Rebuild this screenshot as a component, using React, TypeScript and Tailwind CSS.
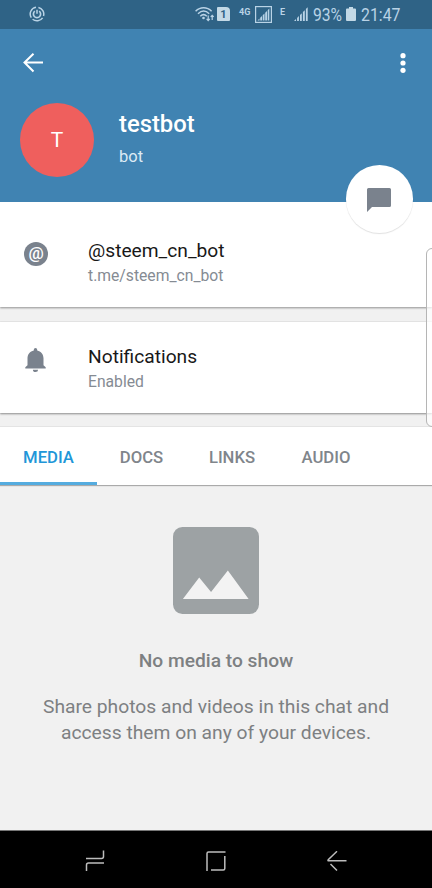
import React from 'react';

const tabs = [
  { name: 'MEDIA', active: true, style: 'w-[97px]' },
  { name: 'DOCS', active: false, style: 'w-[89px]' },
  { name: 'LINKS', active: false, style: 'w-[92px]' },
  { name: 'AUDIO', active: false, style: 'w-[96px]' },
];

function StatusBar() {
  return (
    <div className="flex h-[29px] shrink-0 items-start bg-[#2f6386] text-[#b9d3e6]">
      {/* Data saver */}
      <svg className="ml-[29px] mt-[6px] h-4 w-4 shrink-0" viewBox="0 0 16 16" fill="none" stroke="currentColor" strokeWidth="1.5">
        <path d="M7 1.3A6.8 6.8 0 0 0 2.3 11.7M3.6 13.2A6.8 6.8 0 0 0 13.6 11.8M14.5 10A6.8 6.8 0 0 0 9.4 1.4" />
        <path d="M5.8 5.2A3.6 3.6 0 1 0 10.2 5.2" strokeWidth="1.7" />
        <path d="M8 3.7v4.1" />
      </svg>

      {/* Wifi */}
      <svg className="ml-[150px] mt-[6px] h-4 w-[20px] shrink-0" viewBox="0 0 20 16" fill="none" stroke="currentColor" strokeWidth="1.5">
        <path d="M.6 5.2C5.3 .5 12 .5 16.6 5.2" />
        <path d="M3 7.7C6.5 4.4 10.8 4.4 14.2 7.7" />
        <path d="M5.3 10.2C7.3 8.3 9.9 8.3 11.8 10.2" />
        <circle cx="8.5" cy="12" r="1.3" fill="currentColor" stroke="none" />
        <path d="M13.2 9.5v5M11.6 12.8l1.6 1.7 1.6-1.7M17.2 14V9.3M15.7 10.9l1.5-1.6 1.5 1.6" strokeWidth="1.2" />
      </svg>
      <div className="ml-[2px] mt-[7px] flex h-[14px] w-[13px] shrink-0 items-center justify-center rounded-[1px] rounded-tr-[4px] bg-[#c3d9e6] text-[11px] font-bold leading-none text-[#2f6386]">1</div>
      <span className="ml-[9px] mt-[7px] w-[16px] shrink-0 text-[9px] font-bold leading-[10px]">4G</span>
      <svg className="mt-[6px] h-[17px] w-[17px] shrink-0" viewBox="0 0 17 17" fill="currentColor">
        <rect x=".6" y=".6" width="15.8" height="15.8" fill="none" stroke="currentColor" strokeWidth="1.2" />
        <path d="M2.5 14.5L4.5 12.5V14.5zM5.2 14.5V11.7L7 9.9V14.5zM7.7 14.5V9.2L9.5 7.4V14.5zM10.2 14.5V6.7L12 4.9V14.5zM12.7 14.5V4.2L14.3 2.6V14.5z" />
      </svg>
      <span className="ml-[8px] mt-[7px] w-[14px] shrink-0 text-[9px] font-bold leading-[10px]">E</span>
      <svg className="mt-[7px] h-[14px] w-[14px] shrink-0" viewBox="0 0 14 14" fill="currentColor">
        <path d="M0 14L2 12V14zM3.1 14V10.9L4.9 9.1V14zM6 14V8L7.8 6.2V14zM8.9 14V5.1L10.8 3.2V14zM11.9 14V2.1L13.7 .3V14z" />
      </svg>
      <span className="ml-[5px] mt-[5px] w-[33px] shrink-0 origin-left scale-x-[0.87] text-[18px] leading-5">93%</span>
      <svg className="mt-[7px] h-[14px] w-[10px] shrink-0" viewBox="0 0 10 14" fill="#c3d9e6">
        <path d="M3 0h4v1.5h2a1 1 0 0 1 1 1V13a1 1 0 0 1-1 1H1a1 1 0 0 1-1-1V2.5a1 1 0 0 1 1-1h2z" />
      </svg>
      <span className="ml-[5px] mt-[5px] origin-left scale-x-[0.88] text-[18px] leading-5">21:47</span>
    </div>
  );
}

function Header() {
  return (
    <header className="relative z-10 h-[173px] shrink-0 bg-[#4083b2] text-white">
      <div className="flex h-[67px] items-center justify-between pl-[23px] pr-[26px]">
        <svg className="h-5 w-5" viewBox="0 0 20 20" fill="none" stroke="currentColor" strokeWidth="2">
          <path d="M20 9.5H1.5M10.5 .7L1.5 9.5l9 9" />
        </svg>
        <svg className="h-5 w-[6px]" viewBox="0 0 6 20" fill="currentColor">
          <circle cx="3" cy="2.7" r="2.6" />
          <circle cx="3" cy="10" r="2.6" />
          <circle cx="3" cy="17.3" r="2.6" />
        </svg>
      </div>

      <div className="flex pl-[20px] pt-[7px]">
        <div className="flex h-[74px] w-[74px] items-center justify-center rounded-full bg-[#ef5f5d] text-[21px]">
          <span className="pt-[2px]">T</span>
        </div>
        <div className="ml-[25px] pt-[7px]">
          <h1 className="text-[23.8px] font-medium leading-[28px]">testbot</h1>
          <p className="mt-[8px] text-[16.5px] leading-[22px] text-[#dcebf5]">bot</p>
        </div>
      </div>

      {/* Floating message button */}
      <button className="absolute right-[19px] top-[136px] flex h-[68px] w-[67px] items-center justify-center rounded-full bg-white shadow-[0_1px_1px_rgba(0,0,0,0.12)]">
        <svg className="mr-[1px] mt-[1px] h-6 w-6" viewBox="0 0 24 24" fill="#7a828d">
          <path d="M1.5 0h21A1.5 1.5 0 0 1 24 1.5v16a1.5 1.5 0 0 1-1.5 1.5H5L0 24V1.5A1.5 1.5 0 0 1 1.5 0z" />
        </svg>
      </button>
    </header>
  );
}

function NavBar() {
  return (
    <nav className="flex h-[58px] shrink-0 items-center justify-between border-t border-[#777] bg-black px-[85px] pt-[3px] text-[#bdbdbd]">
      <svg className="h-[22px] w-5" viewBox="0 0 20 22" fill="none" stroke="currentColor" strokeWidth="1.5">
        <path d="M1 8.5h15.500a2 2 0 0 0 2-2V.5M19 13H3.500a2 2 0 0 0-2 2V21" />
      </svg>
      <svg className="h-[21px] w-5" viewBox="0 0 20 21" fill="none" stroke="currentColor" strokeWidth="1.5">
        <path d="M1 20V2.500a1.500 1.500 0 0 1 1.500-1.500H19.500M18.800 5v12.500a1.500 1.500 0 0 1-1.500 1.500H5" />
      </svg>
      <svg className="h-5 w-5" viewBox="0 0 20 20" fill="none" stroke="currentColor" strokeWidth="1.5">
        <path d="M10 .3L1.200 8.800q-.6 1 .5 1H19.500M3.500 13L10 19.500" />
      </svg>
    </nav>
  );
}

export default function App() {
  return (
    <main className="relative flex h-[888px] w-[432px] flex-col overflow-hidden bg-[#f1f1f1] font-['Roboto',sans-serif]">
      <StatusBar />
      <Header />

      {/* Username */}
      <section className="flex h-[105px] shrink-0 bg-white pl-[24px] shadow-[0_1px_2px_rgba(0,0,0,0.4)]">
        <div className="mt-[40px] flex h-6 w-6 items-center justify-center rounded-full bg-[#7a828d] pb-[2px] text-[17px] font-medium leading-none text-white">@</div>
        <div className="ml-[40px] pt-[36px]">
          <p className="text-[19.2px] leading-[25px] text-[#181818]">@steem_cn_bot</p>
          <p className="mt-px text-[15.7px] leading-[23px] text-[#858b93]">t.me/steem_cn_bot</p>
        </div>
      </section>

      {/* Notifications */}
      <section className="mt-[15px] flex h-[91px] shrink-0 bg-white pl-[25px] shadow-[0_0_1px_rgba(0,0,0,0.2),0_1px_2px_rgba(0,0,0,0.4)]">
        <svg className="mt-[26px] h-6 w-[21px]" viewBox="0 0 21 24" fill="#7a828d">
          <path d="M10.5 0A1.7 1.7 0 0 0 8.8 1.7v.7C5 3.2 2.5 6.4 2.5 10.2v7L.3 19.300v1.200h20.400v-1.200l-2.200-2.100v-7c0-3.800-2.500-7-6.300-7.800v-.7A1.700 1.700 0 0 0 10.500 0z" />
          <path d="M7.9 21.7h5.200a2.600 2.300 0 0 1-5.200 0z" />
        </svg>
        <div className="ml-[42px] pt-[22px]">
          <p className="text-[19.2px] leading-[25px] text-[#181818]">Notifications</p>
          <p className="mt-px text-[15.7px] leading-[23px] text-[#858b93]">Enabled</p>
        </div>
      </section>

      {/* Shared media tabs */}
      <div className="mt-[14px] flex h-[58px] shrink-0 bg-white shadow-[0_0_1px_rgba(0,0,0,0.3),0_1px_1px_rgba(0,0,0,0.25)]">
        {tabs.map((tab) => (
          <button
            key={tab.name}
            className={`${tab.style} flex items-center justify-center border-b-[3px] pt-[7px] text-[16.7px] font-medium ${
              tab.active ? 'border-[#55acdf] text-[#2196d8]' : 'border-transparent text-[#80858b]'
            }`}
          >
            {tab.name}
          </button>
        ))}
      </div>

      {/* Empty state */}
      <section className="flex flex-1 flex-col items-center pt-[42px] text-center text-[#7d8082]">
        <svg className="h-[87px] w-[86px]" viewBox="0 0 87 87" preserveAspectRatio="none">
          <rect width="87" height="87" rx="9.5" fill="#9da2a4" />
          <path d="M10 72L26.5 50.5 38.5 65 55.5 43.5 76.5 72z" fill="#f3f3f3" />
        </svg>
        <h2 className="mt-[34px] text-[19.2px] font-medium leading-[26px]">No media to show</h2>
        <p className="mt-[20px] text-[19.25px] leading-[26px]">
          Share photos and videos in this chat and
          <br />
          access them on any of your devices.
        </p>
      </section>

      <NavBar />

      {/* Edge panel handle */}
      <div className="absolute -right-[6px] top-[248px] h-[179px] w-[12px] rounded-[6px] border border-[#b5b5b5] bg-white/70" />
    </main>
  );
}
